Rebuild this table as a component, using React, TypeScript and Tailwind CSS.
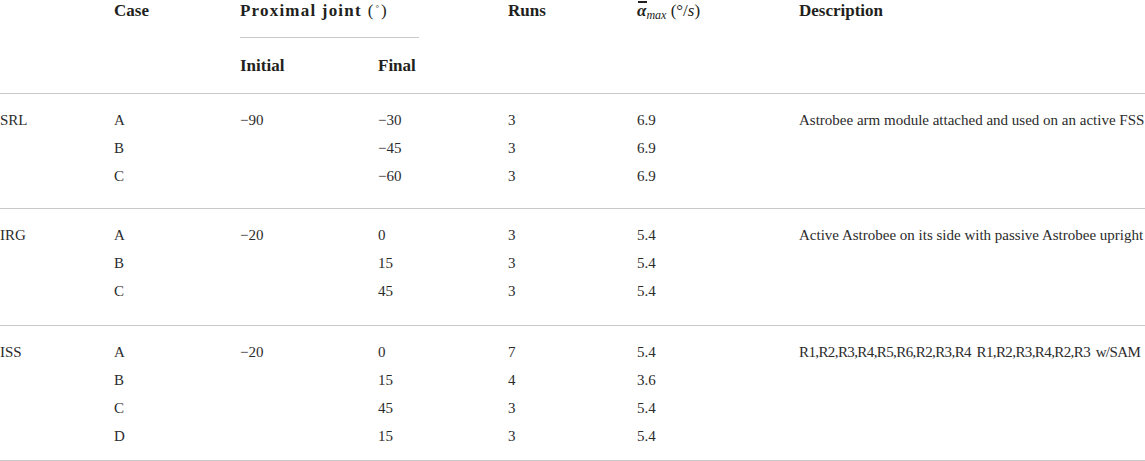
const cols = "grid grid-cols-[114px_126px_138px_130px_129px_162px_1fr]"

type Section = {
  name: string
  initial: string
  desc: string
  rows: { c: string; final: string; runs: string; a: string }[]
  pad: string
  tight?: boolean
}

const sections: Section[] = [
  {
    name: "SRL",
    initial: "\u221290",
    desc: "Astrobee arm module attached and used on an active FSS",
    rows: [
      { c: "A", final: "\u221230", runs: "3", a: "6.9" },
      { c: "B", final: "\u221245", runs: "3", a: "6.9" },
      { c: "C", final: "\u221260", runs: "3", a: "6.9" },
    ],
    pad: "pb-[18px]",
  },
  {
    name: "IRG",
    initial: "\u221220",
    desc: "Active Astrobee on its side with passive Astrobee upright",
    rows: [
      { c: "A", final: "0", runs: "3", a: "5.4" },
      { c: "B", final: "15", runs: "3", a: "5.4" },
      { c: "C", final: "45", runs: "3", a: "5.4" },
    ],
    pad: "pb-[20px]",
  },
  {
    name: "ISS",
    initial: "\u221220",
    desc: "R1,R2,R3,R4,R5,R6,R2,R3,R4\u2009 R1,R2,R3,R4,R2,R3\u2009 w/SAM",
    rows: [
      { c: "A", final: "0", runs: "7", a: "5.4" },
      { c: "B", final: "15", runs: "4", a: "3.6" },
      { c: "C", final: "45", runs: "3", a: "5.4" },
      { c: "D", final: "15", runs: "3", a: "5.4" },
    ],
    pad: "pb-[10px]",
    tight: true,
  },
]

function AlphaHeader() {
  return (
    <span className="whitespace-nowrap">
      <span className="relative inline-block italic">
        α
        <span className="absolute left-[1px] top-[1px] h-[1.5px] w-[9px] bg-[#231f20]" />
        <span className="absolute left-[4px] top-[-4px] h-[2px] w-[2px] rounded-full bg-[#231f20]" />
      </span>
      <span className="text-[12px] leading-none italic font-normal relative top-[3px]">max</span>
      <span className="font-normal"> (°/</span>
      <span className="font-normal italic">s</span>
      <span className="font-normal">)</span>
    </span>
  )
}

export default function App() {
  return (
    <div className="w-[1145px] h-[461px] overflow-hidden bg-white text-[#231f20] font-['Liberation_Serif',serif]">
      {/* header */}
      <div className="border-b border-[#c9c9c9] pb-4 text-[17px] font-bold">
        <div className={cols + " leading-[22px]"}>
          <div />
          <div className="h-[22px]">Case</div>
          <div className="col-span-2">
            <div className="w-[179px] border-b border-[#c9c9c9] pb-[15px]">
              <div className="h-[22px] whitespace-nowrap">
                <span className="tracking-[1.2px]">Proximal joint</span>
                <span className="ml-[6px] font-normal">
                  (<span className="relative top-[-5px] mx-[2px] text-[9px] leading-none">°</span>)
                </span>
              </div>
            </div>
          </div>
          <div className="h-[22px]">Runs</div>
          <div className="h-[22px]">
            <AlphaHeader />
          </div>
          <div className="h-[22px]">Description</div>
        </div>
        <div className={cols + " leading-[22px] mt-[17px]"}>
          <div />
          <div />
          <div>Initial</div>
          <div>Final</div>
        </div>
      </div>

      {sections.map((s) => (
        <div key={s.name} className={"border-b border-[#c9c9c9] pt-[12px] text-[15px] text-[#2b2b2b] " + s.pad}>
          {s.rows.map((r, i) => (
            <div key={r.c} className={cols + " h-[28px] leading-[28px] whitespace-nowrap"}>
              <div>{i === 0 ? s.name : ""}</div>
              <div>{r.c}</div>
              <div>{i === 0 ? s.initial : ""}</div>
              <div>{r.final}</div>
              <div>{r.runs}</div>
              <div>{r.a}</div>
              <div className={s.tight ? "tracking-[-0.6px]" : ""}>{i === 0 ? s.desc : ""}</div>
            </div>
          ))}
        </div>
      ))}
    </div>
  )
}
